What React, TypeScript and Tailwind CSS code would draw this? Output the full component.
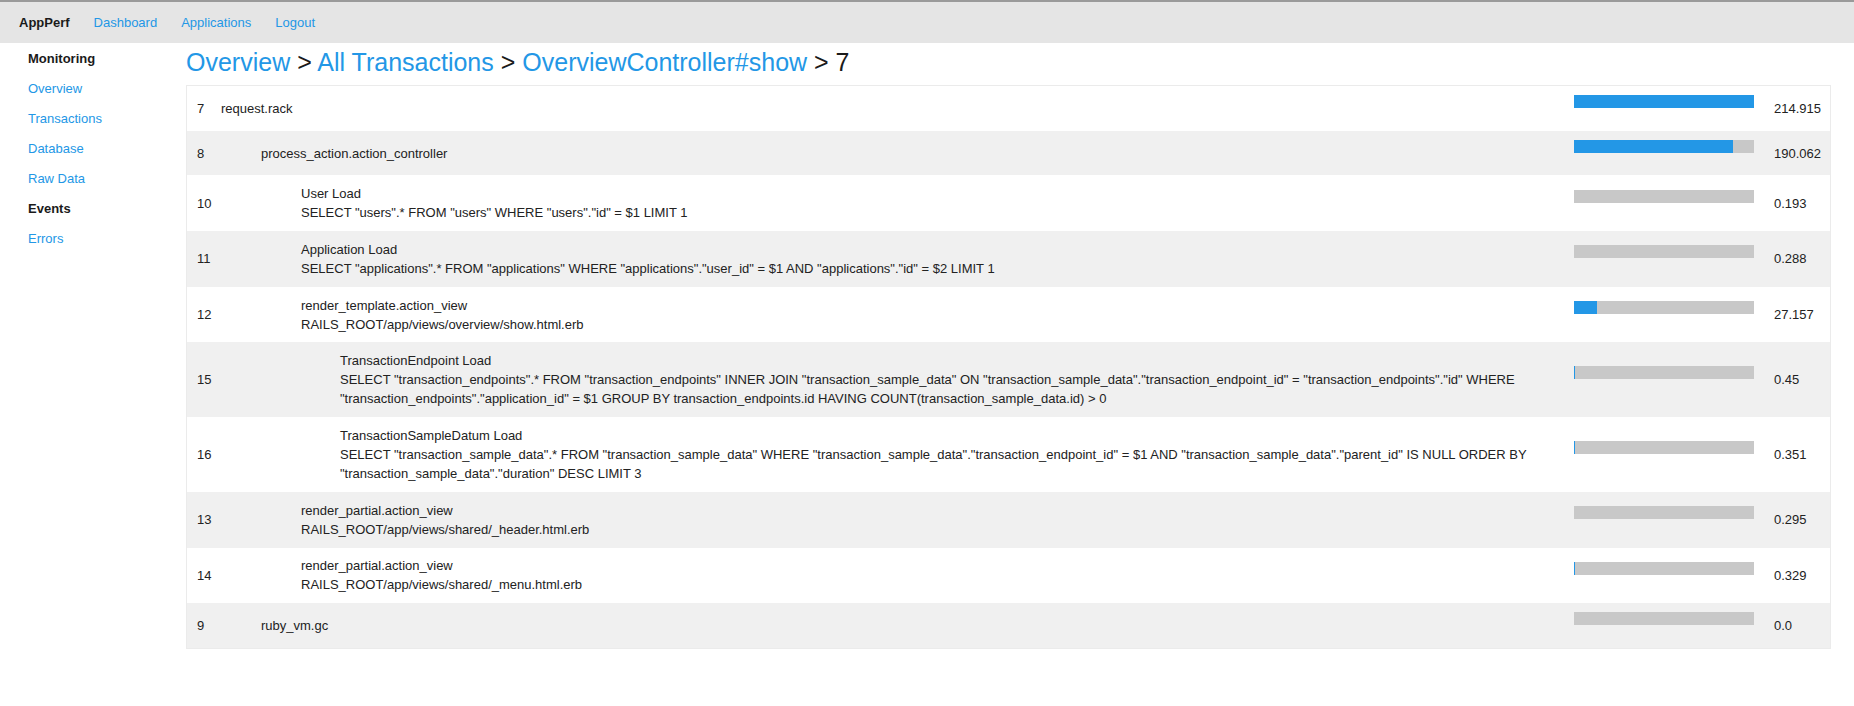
import React from 'react';

interface Span {
    id: number;
    level: number;
    title: string;
    detail?: string;
    duration: string;
    fill: number; // blue part of the bar, px out of 180
}

const spans: Span[] = [
    { id: 7, level: 0, title: 'request.rack', duration: '214.915', fill: 180 },
    { id: 8, level: 1, title: 'process_action.action_controller', duration: '190.062', fill: 159 },
    { id: 10, level: 2, title: 'User Load', detail: 'SELECT "users".* FROM "users" WHERE "users"."id" = $1 LIMIT 1', duration: '0.193', fill: 0 },
    { id: 11, level: 2, title: 'Application Load', detail: 'SELECT "applications".* FROM "applications" WHERE "applications"."user_id" = $1 AND "applications"."id" = $2 LIMIT 1', duration: '0.288', fill: 0 },
    { id: 12, level: 2, title: 'render_template.action_view', detail: 'RAILS_ROOT/app/views/overview/show.html.erb', duration: '27.157', fill: 23 },
    { id: 15, level: 3, title: 'TransactionEndpoint Load', detail: 'SELECT "transaction_endpoints".* FROM "transaction_endpoints" INNER JOIN "transaction_sample_data" ON "transaction_sample_data"."transaction_endpoint_id" = "transaction_endpoints"."id" WHERE "transaction_endpoints"."application_id" = $1 GROUP BY transaction_endpoints.id HAVING COUNT(transaction_sample_data.id) > 0', duration: '0.45', fill: 1 },
    { id: 16, level: 3, title: 'TransactionSampleDatum Load', detail: 'SELECT "transaction_sample_data".* FROM "transaction_sample_data" WHERE "transaction_sample_data"."transaction_endpoint_id" = $1 AND "transaction_sample_data"."parent_id" IS NULL ORDER BY "transaction_sample_data"."duration" DESC LIMIT 3', duration: '0.351', fill: 1 },
    { id: 13, level: 2, title: 'render_partial.action_view', detail: 'RAILS_ROOT/app/views/shared/_header.html.erb', duration: '0.295', fill: 0 },
    { id: 14, level: 2, title: 'render_partial.action_view', detail: 'RAILS_ROOT/app/views/shared/_menu.html.erb', duration: '0.329', fill: 1 },
    { id: 9, level: 1, title: 'ruby_vm.gc', duration: '0.0', fill: 0 },
];

const indent = ['pl-0', 'pl-[40px]', 'pl-[80px]', 'pl-[119px]'];

const sideLinks = [
    { label: 'Monitoring', head: true },
    { label: 'Overview' },
    { label: 'Transactions' },
    { label: 'Database' },
    { label: 'Raw Data' },
    { label: 'Events', head: true },
    { label: 'Errors' },
];

export default function App() {
    return (
        <div className="min-h-[706px] bg-white text-[13px] text-[#222] font-['Liberation_Sans',Arial,sans-serif]">
            {/* Top nav */}
            <div className="h-[43px] bg-[#e5e5e5] border-t-2 border-[#9a9a9a] flex items-center gap-6 pl-[19px]">
                <span className="font-bold text-[#1a1a1a]">AppPerf</span>
                <a className="text-[#2397e6]">Dashboard</a>
                <a className="text-[#2397e6]">Applications</a>
                <a className="text-[#2397e6]">Logout</a>
            </div>

            <div className="flex">
                {/* Sidebar */}
                <div className="w-[186px] shrink-0 pl-[28px] pt-px">
                    {sideLinks.map((l) => (
                        <div
                            key={l.label}
                            className={l.head ? 'leading-[30px] font-bold text-[#1a1a1a]' : 'leading-[30px] text-[#2397e6]'}
                        >
                            {l.label}
                        </div>
                    ))}
                </div>

                {/* Main */}
                <div className="flex-1 pr-[23px] pt-[5px]">
                    <h1 className="text-[25px] leading-[28px] mb-[9px] text-[#1a1a1a]">
                        <a className="text-[#2397e6]">Overview</a> &gt;{' '}
                        <a className="text-[#2397e6]">All Transactions</a> &gt;{' '}
                        <a className="text-[#2397e6]">OverviewController#show</a> &gt; 7
                    </h1>

                    <div className="border border-[#ebebeb]">
                        {spans.map((s, i) => (
                            <div
                                key={s.id}
                                className={`flex items-center py-[8.85px] ${i % 2 === 1 ? 'bg-[#f0f0f0]' : 'bg-white'}`}
                            >
                                <div className="w-[34px] shrink-0 pl-[10px] leading-[19px]">{s.id}</div>
                                <div className={`flex-1 min-w-0 leading-[19px] ${indent[s.level]}`}>
                                    <div>{s.title}</div>
                                    {s.detail && <div>{s.detail}</div>}
                                </div>
                                <div className="w-[200px] shrink-0 pl-5 h-[27px]">
                                    <div className="h-[13px] w-[180px] bg-[#c8c8c8] flex">
                                        <div className="h-full bg-[#2397e6]" style={{ width: s.fill }} />
                                    </div>
                                </div>
                                <div className="w-[76px] shrink-0 pl-5 leading-[19px]">{s.duration}</div>
                            </div>
                        ))}
                    </div>
                </div>
            </div>
        </div>
    );
}
